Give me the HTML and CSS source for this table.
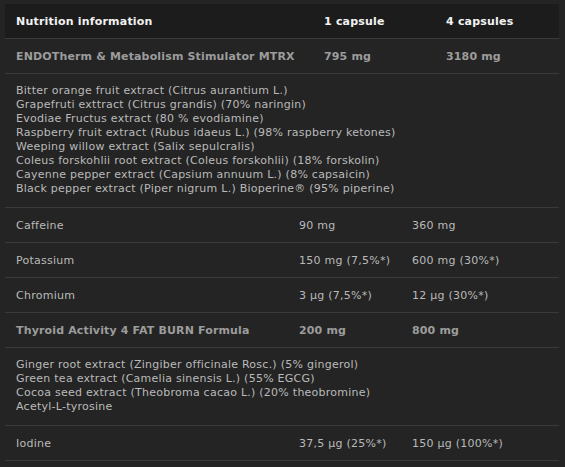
FILE: index.html
```html
<!DOCTYPE html>
<html>
<head>
<meta charset="utf-8">
<link rel="stylesheet" href="styles.css">
</head>
<body>
<div class="panel">
  <div class="row head top">
    <div class="c1">Nutrition information</div>
    <div>1 capsule</div>
    <div>4 capsules</div>
  </div>
  <div class="row top bold">
    <div class="c1">ENDOTherm &amp; Metabolism Stimulator MTRX</div>
    <div>795 mg</div>
    <div>3180 mg</div>
  </div>
  <div class="list">
    <div>Bitter orange fruit extract (Citrus aurantium L.)</div>
    <div>Grapefruti exttract (Citrus grandis) (70% naringin)</div>
    <div>Evodiae Fructus extract (80 % evodiamine)</div>
    <div>Raspberry fruit extract (Rubus idaeus L.) (98% raspberry ketones)</div>
    <div>Weeping willow extract (Salix sepulcralis)</div>
    <div>Coleus forskohlii root extract (Coleus forskohlii) (18% forskolin)</div>
    <div>Cayenne pepper extract (Capsium annuum L.) (8% capsaicin)</div>
    <div>Black pepper extract (Piper nigrum L.) Bioperine® (95% piperine)</div>
  </div>
  <div class="row">
    <div class="c1">Caffeine</div>
    <div>90 mg</div>
    <div>360 mg</div>
  </div>
  <div class="row">
    <div class="c1">Potassium</div>
    <div>150 mg (7,5%*)</div>
    <div>600 mg (30%*)</div>
  </div>
  <div class="row">
    <div class="c1">Chromium</div>
    <div>3 µg (7,5%*)</div>
    <div>12 µg (30%*)</div>
  </div>
  <div class="row bold">
    <div class="c1">Thyroid Activity 4 FAT BURN Formula</div>
    <div>200 mg</div>
    <div>800 mg</div>
  </div>
  <div class="list">
    <div>Ginger root extract (Zingiber officinale Rosc.) (5% gingerol)</div>
    <div>Green tea extract (Camelia sinensis L.) (55% EGCG)</div>
    <div>Cocoa seed extract (Theobroma cacao L.) (20% theobromine)</div>
    <div>Acetyl-L-tyrosine</div>
  </div>
  <div class="row">
    <div class="c1">Iodine</div>
    <div>37,5 µg (25%*)</div>
    <div>150 µg (100%*)</div>
  </div>
</div>
</body>
</html>
```
FILE: styles.css
```css
html, body {
  margin: 0;
  padding: 0;
  background: #242424;
}
body {
  font-family: "DejaVu Sans", sans-serif;
  font-size: 11px;
  letter-spacing: 0.25px;
  color: #bababa;
}
.panel {
  width: 554px;
  margin-left: 5px;
  padding-top: 4px;
}
.row {
  display: grid;
  grid-template-columns: 283px 113px 1fr;
  height: 34px;
  align-items: center;
  border-bottom: 1px solid #3a3a3a;
}
.row.top {
  grid-template-columns: 308px 122px 1fr;
}
.row > div {
  padding-left: 11px;
  white-space: nowrap;
}
.head {
  background: #1c1c1c;
  color: #f2f2f2;
  font-weight: bold;
  letter-spacing: 0.2px;
}
.bold {
  font-weight: bold;
  color: #9c9c9c;
  letter-spacing: 0.15px;
}
.list {
  padding: 10px 11px 11px;
  line-height: 14px;
  border-bottom: 1px solid #3a3a3a;
}
```
